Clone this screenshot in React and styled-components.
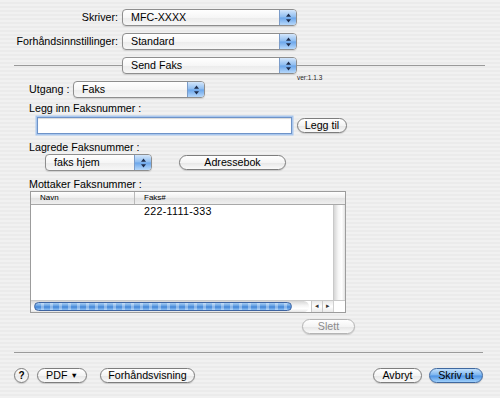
import React from 'react';
import styled, { createGlobalStyle, css } from 'styled-components';

const GlobalStyle = createGlobalStyle`
  html, body {
    margin: 0;
    padding: 0;
  }
  body {
    font-family: "Liberation Sans", Arial, sans-serif;
    font-size: 10.7px;
    color: #000;
  }
`;

const App = () => {
  return (
    <>
      <GlobalStyle />
      <Page>
        <TopGrid>
          <RightLabel>Skriver:</RightLabel>
          <Popup label="MFC-XXXX" width={175} />
          <RightLabel>Forhåndsinnstillinger:</RightLabel>
          <Popup label="Standard" width={175} />
        </TopGrid>

        <SectionRow>
          <Rule $w="108px" />
          <Popup label="Send Faks" width={175} />
          <Rule />
        </SectionRow>
        <Version>ver:1.1.3</Version>

        <Content>
          <Row>
            <InlineLabel>Utgang :</InlineLabel>
            <Popup label="Faks" width={132} />
          </Row>

          <Label $mt={4}>Legg inn Faksnummer :</Label>
          <Row $mt={3} $pl={8}>
            <TextInput />
            <Button $w={50} $ml={5}>Legg til</Button>
          </Row>

          <Label $mt={7}>Lagrede Faksnummer :</Label>
          <Row $mt={1} $pl={16}>
            <Popup label="faks hjem" width={107} />
            <Button $w={107} $ml={27}>Adressebok</Button>
          </Row>

          <Label $mt={7}>Mottaker Faksnummer :</Label>
          <Table>
            <Header>
              <HeadCell $w={104}>Navn</HeadCell>
              <HeadCell $last>Faks#</HeadCell>
            </Header>
            <Body>
              <Rows>
                <DataRow>
                  <DataCell $w={104}></DataCell>
                  <DataCell>222-1111-333</DataCell>
                </DataRow>
              </Rows>
              <VTrack />
            </Body>
            <HScrollRow>
              <HTrack>
                <HThumb />
              </HTrack>
              <ArrowBox>
                <ArrowBtn>◂</ArrowBtn>
                <ArrowBtn>▸</ArrowBtn>
              </ArrowBox>
              <Corner />
            </HScrollRow>
          </Table>

          <Row $mt={6} $pl={273}>
            <Button $w={53} $disabled>Slett</Button>
          </Row>
        </Content>

        <BottomRule />

        <Footer>
          <HelpButton>?</HelpButton>
          <Button $w={50} $ml={8}>PDF <Tri>▼</Tri></Button>
          <Button $w={95} $ml={13}>Forhåndsvisning</Button>
          <Spacer />
          <Button $w={49}>Avbryt</Button>
          <Button $w={54} $ml={7} $primary>Skriv ut</Button>
        </Footer>
      </Page>
    </>
  );
};

const Popup = ({ label, width }) => (
  <PopupBox style={{ width }}>
    <PopupText>{label}</PopupText>
    <PopupArrows>
      <svg width="7" height="10" viewBox="0 0 7 10">
        <path d="M3.5 0.5 L6 3.8 L1 3.8 Z" fill="#1d2b4a" />
        <path d="M3.5 9.5 L6 6.2 L1 6.2 Z" fill="#1d2b4a" />
      </svg>
    </PopupArrows>
  </PopupBox>
);

const Page = styled.div`
  width: 500px;
  height: 398px;
  box-sizing: border-box;
  padding-top: 9px;
  overflow: hidden;
  background: repeating-linear-gradient(
    to bottom,
    #f1f1f1 0px,
    #f1f1f1 2px,
    #ebebeb 2px,
    #ebebeb 4px
  );
  display: flex;
  flex-direction: column;
`;

const TopGrid = styled.div`
  display: grid;
  grid-template-columns: 118px 175px;
  column-gap: 4px;
  row-gap: 7px;
  align-items: center;
`;

const RightLabel = styled.div`
  text-align: right;
  line-height: 17px;
`;

const PopupBox = styled.div`
  height: 17px;
  box-sizing: border-box;
  display: flex;
  align-items: stretch;
  border: 1px solid #8e8e8e;
  border-radius: 4px;
  overflow: hidden;
  background: linear-gradient(#ffffff, #f6f6f6 50%, #ebebeb 52%, #f7f7f7);
  box-shadow: 0 1px 1px rgba(0, 0, 0, 0.12);
`;

const PopupText = styled.div`
  flex: 1;
  padding-left: 8px;
  line-height: 15px;
  white-space: nowrap;
`;

const PopupArrows = styled.div`
  width: 16px;
  display: flex;
  align-items: center;
  justify-content: center;
  border-left: 1px solid #7b9cc9;
  background: linear-gradient(#d3e6fb, #8dbcf0 48%, #6aa5ea 52%, #b7d8fa);
`;

const SectionRow = styled.div`
  margin-top: 7px;
  display: flex;
  align-items: center;
  padding: 0 15px 0 14px;
`;

const Rule = styled.div`
  height: 1px;
  background: #9a9a9a;
  ${(p) => (p.$w ? css`width: ${p.$w};` : css`flex: 1;`)}
`;

const Version = styled.div`
  padding-left: 297px;
  font-size: 6.5px;
  line-height: 7px;
  height: 7px;
  color: #222;
`;

const Content = styled.div`
  padding-left: 29px;
  display: flex;
  flex-direction: column;
`;

const Row = styled.div`
  display: flex;
  align-items: center;
  margin-top: ${(p) => p.$mt || 0}px;
  padding-left: ${(p) => p.$pl || 0}px;
`;

const InlineLabel = styled.div`
  width: 44px;
  line-height: 17px;
`;

const Label = styled.div`
  line-height: 12px;
  margin-top: ${(p) => p.$mt || 0}px;
`;

const TextInput = styled.div`
  width: 255px;
  height: 17px;
  box-sizing: border-box;
  background: #fff;
  border: 1px solid #6e93c8;
  box-shadow: 0 0 0 1.5px #a9c7ee, inset 0 1px 1px rgba(0, 0, 0, 0.15);
`;

const Button = styled.div`
  width: ${(p) => p.$w}px;
  margin-left: ${(p) => p.$ml || 0}px;
  height: 15px;
  box-sizing: border-box;
  border: 1px solid ${(p) => (p.$disabled ? '#b4b4b4' : '#7d7d7d')};
  border-radius: 8px;
  background: linear-gradient(#ffffff, #f4f4f4 50%, #e6e6e6 52%, #fafafa);
  box-shadow: 0 1px 1px rgba(0, 0, 0, 0.15);
  text-align: center;
  line-height: 13px;
  white-space: nowrap;
  color: ${(p) => (p.$disabled ? '#8c8c8c' : '#000')};
  ${(p) =>
    p.$primary &&
    css`
      border-color: #3f689f;
      background: linear-gradient(#c3e0fb, #7ab4ef 48%, #4d92e3 52%, #9fd0fb);
    `}
`;

const Tri = styled.span`
  font-size: 7.5px;
  vertical-align: 1px;
`;

const Table = styled.div`
  margin-top: 1px;
  margin-left: 1px;
  width: 316px;
  height: 122px;
  box-sizing: border-box;
  border: 1px solid #9c9c9c;
  background: #fff;
  display: flex;
  flex-direction: column;
`;

const Header = styled.div`
  height: 12px;
  flex: none;
  display: flex;
  border-bottom: 1px solid #a8a8a8;
  background: linear-gradient(#ffffff, #eeeeee 50%, #e2e2e2 52%, #efefef);
  font-size: 8px;
  line-height: 11px;
`;

const HeadCell = styled.div`
  box-sizing: border-box;
  padding-left: 9px;
  ${(p) => (p.$w ? css`width: ${p.$w}px;` : css`flex: 1;`)}
  ${(p) => !p.$last && css`border-right: 1px solid #b9b9b9;`}
`;

const Body = styled.div`
  flex: 1;
  display: flex;
  min-height: 0;
`;

const Rows = styled.div`
  flex: 1;
`;

const DataRow = styled.div`
  display: flex;
  height: 13px;
  line-height: 13px;
`;

const DataCell = styled.div`
  box-sizing: border-box;
  padding-left: 9px;
  letter-spacing: 0.3px;
  ${(p) => (p.$w ? css`width: ${p.$w}px;` : css`flex: 1;`)}
`;

const VTrack = styled.div`
  width: 11px;
  border-left: 1px solid #c9c9c9;
  background: linear-gradient(to right, #d6d6d6, #f6f6f6 40%, #ffffff 70%, #e2e2e2);
`;

const HScrollRow = styled.div`
  height: 11px;
  flex: none;
  display: flex;
  border-top: 1px solid #c9c9c9;
`;

const HTrack = styled.div`
  flex: 1;
  display: flex;
  align-items: center;
  padding-left: 3px;
  background: linear-gradient(#d6d6d6, #f4f4f4 40%, #ffffff 70%, #e4e4e4);
  border-radius: 0 6px 6px 0;
`;

const HThumb = styled.div`
  width: 258px;
  height: 9px;
  box-sizing: border-box;
  border: 1px solid #3e64a1;
  border-radius: 5px;
  background: repeating-linear-gradient(
      to right,
      transparent 0px,
      transparent 6px,
      rgba(255, 255, 255, 0.35) 6px,
      rgba(255, 255, 255, 0.35) 9px
    ),
    linear-gradient(#a8cdf3, #5f9de2 45%, #3f82d6 55%, #8ec0f2);
`;

const ArrowBox = styled.div`
  display: flex;
  width: 22px;
  margin-left: 2px;
  background: linear-gradient(#e8e8e8, #ffffff 50%, #e9e9e9);
`;

const ArrowBtn = styled.div`
  flex: 1;
  font-size: 7px;
  line-height: 10px;
  text-align: center;
  color: #333;
  border-left: 1px solid #c8c8c8;
`;

const Corner = styled.div`
  width: 11px;
  background: #fff;
  border-left: 1px solid #d0d0d0;
`;

const BottomRule = styled.div`
  margin: 18px 17px 0 14px;
  height: 1px;
  background: #9a9a9a;
`;

const Footer = styled.div`
  margin-top: 15px;
  display: flex;
  align-items: center;
  padding: 0 17px 0 14px;
`;

const HelpButton = styled.div`
  width: 15px;
  height: 15px;
  box-sizing: border-box;
  border: 1px solid #7d7d7d;
  border-radius: 50%;
  background: linear-gradient(#ffffff, #ececec 55%, #f8f8f8);
  box-shadow: 0 1px 1px rgba(0, 0, 0, 0.15);
  font-weight: bold;
  font-size: 10px;
  line-height: 13px;
  text-align: center;
`;

const Spacer = styled.div`
  flex: 1;
`;

export default App;
